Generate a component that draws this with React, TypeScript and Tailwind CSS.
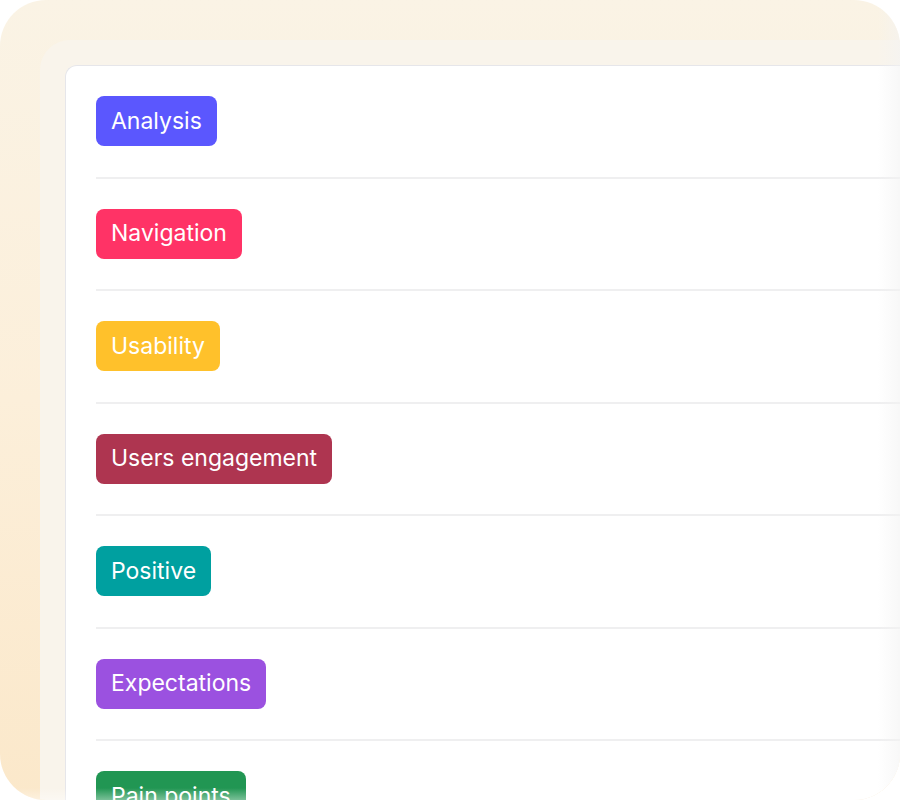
const tags = [
  { label: "Analysis", color: "bg-[#5b57fe]" },
  { label: "Navigation", color: "bg-[#ff3366]" },
  { label: "Usability", color: "bg-[#ffc12b]" },
  { label: "Users engagement", color: "bg-[#ae3550]" },
  { label: "Positive", color: "bg-[#00a0a0]" },
  { label: "Expectations", color: "bg-[#9b51e0]" },
  { label: "Pain points", color: "bg-[#219653]" },
];

function TagRow({ label, color }: { label: string; color: string }) {
  return (
    <div className="border-b-2 border-[#efeff0] pb-[30.5px] pt-[30px]">
      <span
        className={`inline-flex h-[50px] items-center rounded-lg px-[15px] text-[23px] leading-none text-white ${color}`}
      >
        {label}
      </span>
    </div>
  );
}

export default function App() {
  return (
    <div className="h-[800px] w-[900px] bg-white font-['Inter',sans-serif]">
      <div className="relative h-full overflow-hidden rounded-[46px] bg-gradient-to-b from-[#faf3e5] via-[#fcefda] to-[#fbe8ca] pl-10 pt-10">
        <div className="h-full rounded-tl-[30px] bg-[#f9f4eb] pl-[25px] pt-[25px]">
          <div className="h-full overflow-hidden rounded-tl-xl border-l border-t border-[#e6e6ea] bg-white pl-[30px]">
            {tags.map((t) => (
              <TagRow key={t.label} {...t} />
            ))}
          </div>
        </div>

        {/* soft fades on the cut edges */}
        <div className="pointer-events-none absolute inset-y-0 right-0 w-[22px] bg-gradient-to-r from-transparent to-[#f3f3f3]/60" />
        <div className="pointer-events-none absolute inset-x-0 bottom-0 h-[12px] bg-gradient-to-b from-transparent to-white/40" />
      </div>
    </div>
  );
}
